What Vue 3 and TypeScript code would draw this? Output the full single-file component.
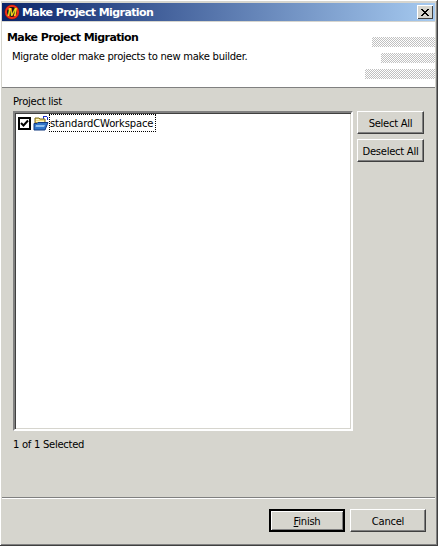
<template>
  <div class="window">
    <div class="titlebar">
      <svg class="app-icon" width="16" height="16" viewBox="0 0 16 16">
        <circle cx="8" cy="8" r="7.5" fill="#7a1408" />
        <circle cx="8" cy="8" r="6" fill="#141414" stroke="#f0301c" stroke-width="2" />
        <path d="M3.500 3.500l2 2M10.500 10.500l2 2" stroke="#f0301c" stroke-width="2" />
        <text x="8" y="12" text-anchor="middle" class="app-icon-m">M</text>
      </svg>
      <span class="title">{{ title }}</span>
      <div class="close">
        <svg width="8" height="7" viewBox="0 0 8 7">
          <path d="M0 0h2v1h1v1h2V1h1V0h2v1H7v1H6v1H5v1h1v1h1v1h1v1H6V6H5V5H3v1H2v1H0V6h1V5h1V4h1V3H2V2H1V1H0z" fill="#000" />
        </svg>
      </div>
    </div>

    <div class="banner">
      <div class="banner-text">
        <div class="banner-title">{{ title }}</div>
        <div class="banner-desc">Migrate older make projects to new make builder.</div>
      </div>
      <div class="banner-art">
        <div class="hatch" style="width: 63px"></div>
        <div class="hatch" style="width: 54px"></div>
        <div class="hatch" style="width: 70px"></div>
      </div>
    </div>

    <div class="body">
      <div class="label">Project list</div>
      <div class="list-row">
        <div class="list">
          <div class="item">
            <span class="check">
              <svg width="9" height="9" viewBox="0 0 9 9">
                <path d="M1 4l2.500 2.500L8 1.500" fill="none" stroke="#000" stroke-width="2" />
              </svg>
            </span>
            <svg class="folder" width="16" height="16" viewBox="0 0 16 16">
              <path d="M10 1h4v1h1v3h-1V2h-3v2h-1z" fill="#1c2fd0" />
              <path d="M2 3h4l1 1h5v4H2z" fill="#f0d878" stroke="#7a6a20" stroke-width="1" />
              <path d="M3 4h3v1H3zM3 6h8v1H3z" fill="#fff6c0" />
              <path d="M1 15V8.500h3l1-1h10L12 15z" fill="#2f74c8" stroke="#123a80" stroke-width="1" />
              <path d="M3 10h9l-1 2H2.500z" fill="#8fc0f0" />
            </svg>
            <span class="item-name">standardCWorkspace</span>
          </div>
        </div>
        <div class="side-buttons">
          <button class="btn">Select All</button>
          <button class="btn">Deselect All</button>
        </div>
      </div>
      <div class="status">{{ selected }} of {{ total }} Selected</div>
    </div>

    <div class="footer">
      <button class="btn btn-default"><u>F</u>inish</button>
      <button class="btn btn-cancel">Cancel</button>
    </div>
  </div>
</template>

<script setup lang="ts">
const title = 'Make Project Migration'
const selected = 1
const total = 1
</script>

<style>
html,
body {
  margin: 0;
  background: #d6d5ce;
}
</style>

<style scoped>
.window {
  box-sizing: border-box;
  width: 438px;
  height: 546px;
  display: flex;
  flex-direction: column;
  padding: 1px;
  background: #d6d5ce;
  border-right: 1px solid #404040;
  border-bottom: 1px solid #404040;
  font-family: "DejaVu Sans", sans-serif;
  font-size: 10px;
  letter-spacing: -0.27px;
  color: #000;
  box-shadow: inset 1px 1px 0 #fff, inset -1px -1px 0 #808080;
}

.titlebar {
  margin: 2px 1px 1px 1px;
  height: 18px;
  flex: none;
  display: flex;
  align-items: center;
  padding: 0 2px;
  background: linear-gradient(90deg, #0a246a, #a6caf0);
  color: #fff;
}

.app-icon {
  flex: none;
}

.app-icon-m {
  font-family: "Liberation Sans", sans-serif;
  font-size: 11px;
  font-weight: bold;
  font-style: italic;
  letter-spacing: 0;
  fill: #ffe020;
}

.title {
  margin-left: 2px;
  flex: 1;
  font-size: 11px;
  font-weight: bold;
  letter-spacing: -0.6px;
}

.close {
  width: 16px;
  height: 14px;
  box-sizing: border-box;
  display: flex;
  align-items: center;
  justify-content: center;
  background: #d6d5ce;
  box-shadow: inset 1px 1px 0 #fff, inset -1px -1px 0 #404040;
}

.banner {
  margin: 0 1px;
  height: 65px;
  flex: none;
  display: flex;
  justify-content: space-between;
  background: #fff;
  border-bottom: 1px solid #808080;
}

.banner-title {
  margin: 9px 0 0 5px;
  font-size: 11px;
  font-weight: bold;
  letter-spacing: -0.6px;
}

.banner-desc {
  margin: 7px 0 0 10px;
}

.banner-art {
  display: flex;
  flex-direction: column;
  align-items: flex-end;
  gap: 6px;
  padding-top: 15px;
}

.hatch {
  height: 10px;
  background: repeating-conic-gradient(#c0c0c0 0 25%, #fff 0 50%) 0 0 / 2px 2px;
}

.body {
  flex: 1;
  display: flex;
  flex-direction: column;
  padding: 7px 11px 0;
  border-bottom: 1px solid #808080;
  margin: 0 1px;
  box-shadow: 0 1px 0 #fff;
}

.label {
  height: 16px;
  line-height: 14px;
}

.list-row {
  display: flex;
  gap: 4px;
}

.list {
  box-sizing: border-box;
  width: 341px;
  height: 320px;
  padding: 1px 3px;
  background: #fff;
  border: 2px solid;
  border-color: #808080 #fff #fff #808080;
  box-shadow: inset 1px 1px 0 #404040, inset -1px -1px 0 #d6d5ce;
}

.item {
  display: flex;
  align-items: center;
  height: 18px;
}

.check {
  box-sizing: border-box;
  width: 13px;
  height: 13px;
  margin-right: 2px;
  border: 2px solid #000;
  display: flex;
  align-items: center;
  justify-content: center;
  flex: none;
}

.folder {
  flex: none;
}

.item-name {
  height: 18px;
  box-sizing: border-box;
  padding: 0 3px 0 1px;
  outline: 1px dotted #000;
  outline-offset: -1px;
  line-height: 20px;
  letter-spacing: -0.15px;
}

.side-buttons {
  display: flex;
  flex-direction: column;
  gap: 5px;
}

.btn {
  box-sizing: border-box;
  width: 67px;
  height: 23px;
  padding: 1px 0 0;
  font: inherit;
  letter-spacing: inherit;
  color: #000;
  background: #d6d5ce;
  border: 1px solid;
  border-color: #fff #404040 #404040 #fff;
  box-shadow: inset -1px -1px 0 #808080;
}

.status {
  margin-top: 7px;
  line-height: 14px;
}

.footer {
  box-sizing: border-box;
  height: 45px;
  flex: none;
  display: flex;
  justify-content: flex-end;
  align-items: flex-start;
  gap: 5px;
  margin: 1px 1px 0;
  padding: 10px 9px 0 0;
}

.btn-default,
.btn-cancel {
  width: 76px;
}

.btn-default {
  border: 2px solid #000;
  box-shadow: inset 1px 1px 0 #fff, inset -1px -1px 0 #808080;
}
</style>
